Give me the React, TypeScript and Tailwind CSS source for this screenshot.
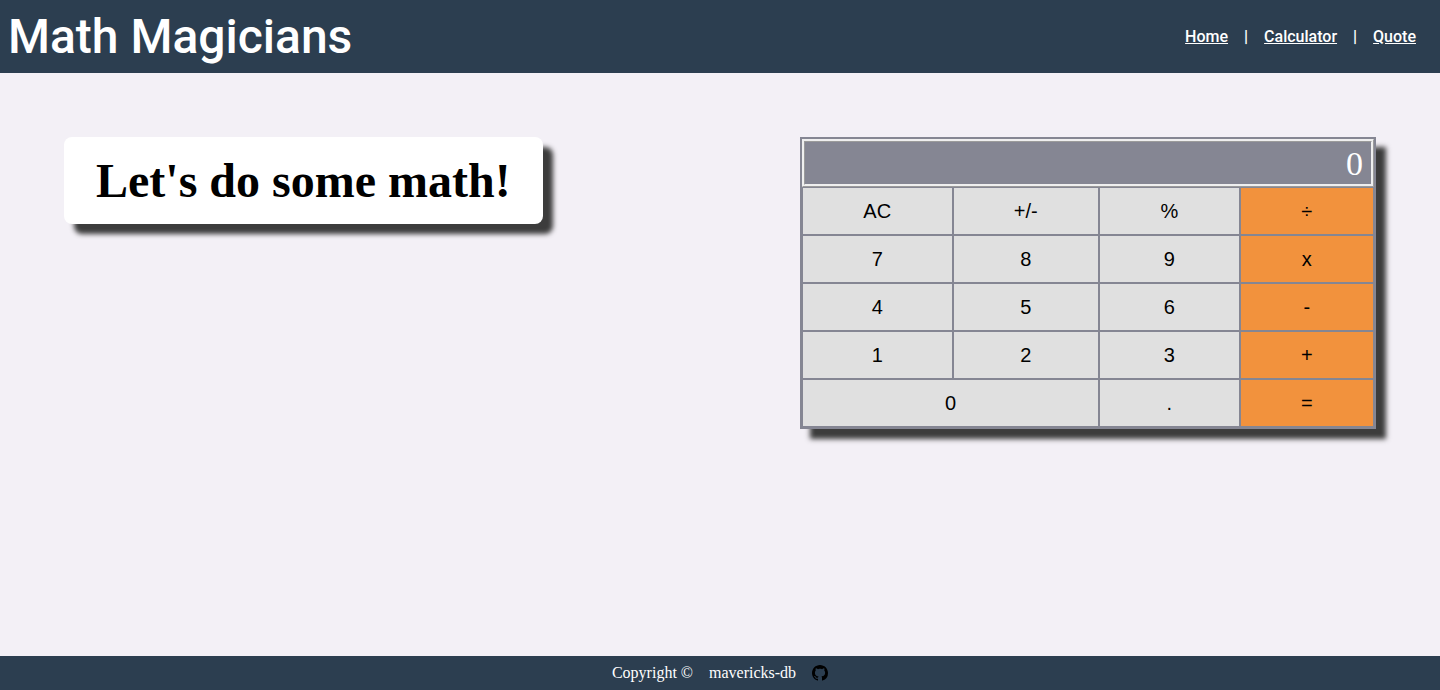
import React from "react";

type Key = { label: string; wide?: boolean; operator?: boolean };

const keys: Key[] = [
  { label: "AC" },
  { label: "+/-" },
  { label: "%" },
  { label: "÷", operator: true },
  { label: "7" },
  { label: "8" },
  { label: "9" },
  { label: "x", operator: true },
  { label: "4" },
  { label: "5" },
  { label: "6" },
  { label: "-", operator: true },
  { label: "1" },
  { label: "2" },
  { label: "3" },
  { label: "+", operator: true },
  { label: "0", wide: true },
  { label: "." },
  { label: "=", operator: true },
];

function Header() {
  return (
    <header className="flex items-center justify-between bg-[#2c3e50] px-2 py-2 font-['Roboto',sans-serif] text-white">
      <h1 className="text-[48px] leading-[57px] font-medium">Math Magicians</h1>
      <nav className="flex items-center gap-4 px-4 text-base font-medium">
        <a href="#home" className="underline">Home</a>
        <span className="font-bold">|</span>
        <a href="#calculator" className="underline">Calculator</a>
        <span className="font-bold">|</span>
        <a href="#quote" className="underline">Quote</a>
      </nav>
    </header>
  );
}

function Calculator() {
  return (
    <section
      aria-label="Calculator"
      className="w-[40vw] border-2 border-[#858693] shadow-[10px_10px_5px_#3c3c3c]"
    >
      <input
        type="text"
        aria-label="Result"
        readOnly
        value="0"
        className="block h-12 w-full border-[3px] border-[#efefef] bg-[#858693] px-2 text-right font-['Liberation_Serif',serif] text-[34px] text-white outline-none [border-style:ridge]"
      />
      <div className="grid grid-cols-[auto_auto_auto_auto]">
        {keys.map((key) => (
          <button
            key={key.label}
            type="button"
            className={`h-12 border border-[#858693] font-['Liberation_Sans',sans-serif] text-xl text-black ${
              key.wide ? "col-span-2" : ""
            } ${key.operator ? "bg-[#f2923d]" : "bg-[#e0e0e0]"}`}
          >
            {key.label}
          </button>
        ))}
      </div>
    </section>
  );
}

function Footer() {
  return (
    <footer className="flex items-center justify-center gap-4 bg-[#2c3e50] py-2 text-base leading-[18px] text-white">
      <span>Copyright ©</span>
      <span>mavericks-db</span>
      <a href="#github" aria-label="GitHub" className="text-black">
        <svg viewBox="0 0 16 16" className="size-4" fill="currentColor" aria-hidden="true">
          <path d="M8 0C3.58 0 0 3.58 0 8c0 3.54 2.29 6.53 5.47 7.59.4.07.55-.17.55-.38 0-.19-.01-.82-.01-1.49-2.01.37-2.53-.49-2.69-.94-.09-.23-.48-.94-.82-1.13-.28-.15-.68-.52-.01-.53.63-.01 1.08.58 1.23.82.72 1.21 1.87.87 2.33.66.07-.52.28-.87.51-1.07-1.78-.2-3.64-.89-3.64-3.95 0-.87.31-1.59.82-2.15-.08-.2-.36-1.02.08-2.12 0 0 .67-.21 2.2.82.64-.18 1.32-.27 2-.27s1.36.09 2 .27c1.53-1.04 2.2-.82 2.2-.82.44 1.1.16 1.92.08 2.12.51.56.82 1.27.82 2.15 0 3.07-1.87 3.75-3.65 3.95.29.25.54.73.54 1.48 0 1.07-.01 1.93-.01 2.2 0 .21.15.46.55.38A8.01 8.01 0 0 0 16 8c0-4.42-3.58-8-8-8z" />
        </svg>
      </a>
    </footer>
  );
}

export default function App() {
  return (
    <div className="flex min-h-screen flex-col bg-[#f3f0f6] font-['Liberation_Serif',serif]">
      <Header />
      <main className="flex flex-1 items-start justify-between p-16">
        <h2 className="rounded-lg bg-white px-8 py-4 text-[48px] leading-[55px] font-bold text-black shadow-[10px_10px_5px_#3c3c3c]">
          Let's do some math!
        </h2>
        <Calculator />
      </main>
      <Footer />
    </div>
  );
}
